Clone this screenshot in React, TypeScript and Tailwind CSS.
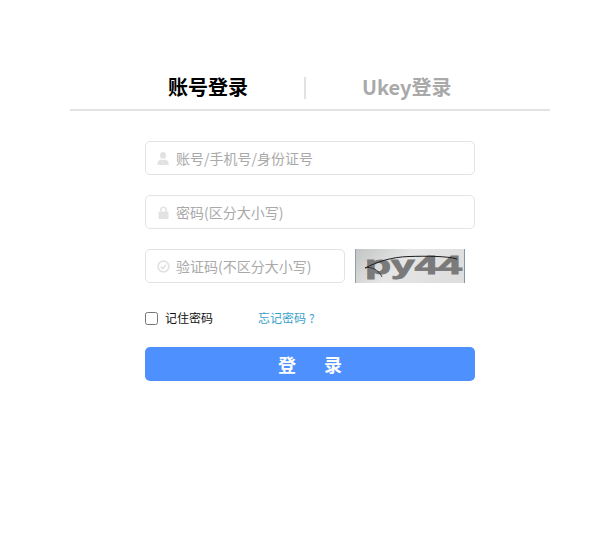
import { ReactNode } from "react";

const fontStack = "font-['Noto_Sans_CJK_SC','Noto_Sans',sans-serif]";

function Field({ icon, placeholder, width }: { icon: ReactNode; placeholder: string; width: string }) {
  return (
    <div className={`${width} h-[34px] flex items-center border border-[#e3e3e3] rounded-[5px] bg-white pl-[10px]`}>
      <span className="w-[14px] h-[14px] flex items-center justify-center text-[#e2e2e2]">{icon}</span>
      <span className="ml-[6px] text-[14px] leading-[20px] text-[#a9a9a9]">{placeholder}</span>
    </div>
  );
}

function UserIcon() {
  return (
    <svg width="12" height="13" viewBox="0 0 12 13" fill="currentColor">
      <ellipse cx="6" cy="3.4" rx="3" ry="3.4" />
      <path d="M0.5 13V10.6C0.5 8.9 2.2 8 4 7.4C5.2 8.2 6.8 8.2 8 7.4C9.8 8 11.5 8.9 11.5 10.6V13Z" />
    </svg>
  );
}

function LockIcon() {
  return (
    <svg width="11" height="13" viewBox="0 0 11 13" fill="currentColor">
      <path d="M2 5.5V3.8C2 1.8 3.5 0.5 5.5 0.5C7.5 0.5 9 1.8 9 3.8V5.5H7.4V3.9C7.4 2.8 6.6 2.1 5.5 2.1C4.4 2.1 3.6 2.8 3.6 3.9V5.5Z" />
      <rect x="0.5" y="5.5" width="10" height="7.5" rx="0.8" />
    </svg>
  );
}

function CheckIcon() {
  return (
    <svg width="13" height="13" viewBox="0 0 13 13" fill="none" stroke="currentColor">
      <circle cx="6.5" cy="6.5" r="5.4" strokeWidth="1.7" />
      <path d="M3.8 6.6L5.8 8.5L9.2 4.8" strokeWidth="1.6" />
    </svg>
  );
}

function Captcha() {
  return (
    <svg width="110" height="34" viewBox="0 0 110 34" className="block">
      <defs>
        <linearGradient id="captchaBg" x1="0" y1="0" x2="1" y2="0.3">
          <stop offset="0" stopColor="#c2c4c4" />
          <stop offset="0.5" stopColor="#e6e6e6" />
          <stop offset="1" stopColor="#dedede" />
        </linearGradient>
      </defs>
      <rect width="110" height="34" fill="url(#captchaBg)" />
      <rect x="0" width="1" height="34" fill="#8fa0ab" />
      <rect x="109" width="1" height="34" fill="#7f97a8" />
      <text
        x="10"
        y="25"
        fontFamily="'Liberation Sans', sans-serif"
        fontWeight="700"
        fontSize="25"
        fill="#7a7a7a"
        stroke="#7a7a7a"
        strokeWidth="0.9"
        textLength="97"
        lengthAdjust="spacingAndGlyphs"
      >
        py44
      </text>
      <path d="M10 19C22 13 36 8 54 7.5C72 7 92 7 102 10" fill="none" stroke="#1c1c1c" strokeWidth="1" />
      <path d="M10 19C16 17 24 21 27 28" fill="none" stroke="#1c1c1c" strokeWidth="0.8" />
    </svg>
  );
}

export default function App() {
  return (
    <div className={`w-[598px] h-[540px] bg-white ${fontStack} pt-[72px]`}>
      {/* tabs */}
      <div className="ml-[70px] w-[480px] h-[39px] border-b-2 border-[#e2e2e2] flex items-start">
        <div className="w-[234px] pr-[56px] pt-[1px] flex justify-end text-[20px] leading-[28px] font-bold text-black">
          账号登录
        </div>
        <div className="w-[2px] h-[22px] mt-[5px] bg-[#e2e2e2]" />
        <div className="pl-[56px] pt-[1px] text-[20px] leading-[28px] font-bold text-[#a9a9a9]">Ukey登录</div>
      </div>

      <div className="ml-[145px] w-[330px] mt-[30px] flex flex-col">
        <Field width="w-[330px]" icon={<UserIcon />} placeholder="账号/手机号/身份证号" />
        <div className="mt-[20px]">
          <Field width="w-[330px]" icon={<LockIcon />} placeholder="密码(区分大小写)" />
        </div>
        <div className="mt-[20px] flex">
          <Field width="w-[200px]" icon={<CheckIcon />} placeholder="验证码(不区分大小写)" />
          <div className="ml-[10px]">
            <Captcha />
          </div>
        </div>

        <div className="mt-[27px] h-[16px] flex items-center text-[12px] leading-[16px]">
          <input type="checkbox" className="w-[13px] h-[13px] m-0" />
          <span className="ml-[7px] w-[93px] text-[#111111]">记住密码</span>
          <a className="text-[#3a9fc8]">
            忘记密码<span className="ml-[3px]">?</span>
          </a>
        </div>

        <button className="mt-[21px] h-[34px] rounded-[5px] bg-[#4d90fe] text-white text-[18px] font-bold flex items-center justify-center">
          <span>登</span>
          <span className="ml-[28px]">录</span>
        </button>
      </div>
    </div>
  );
}
